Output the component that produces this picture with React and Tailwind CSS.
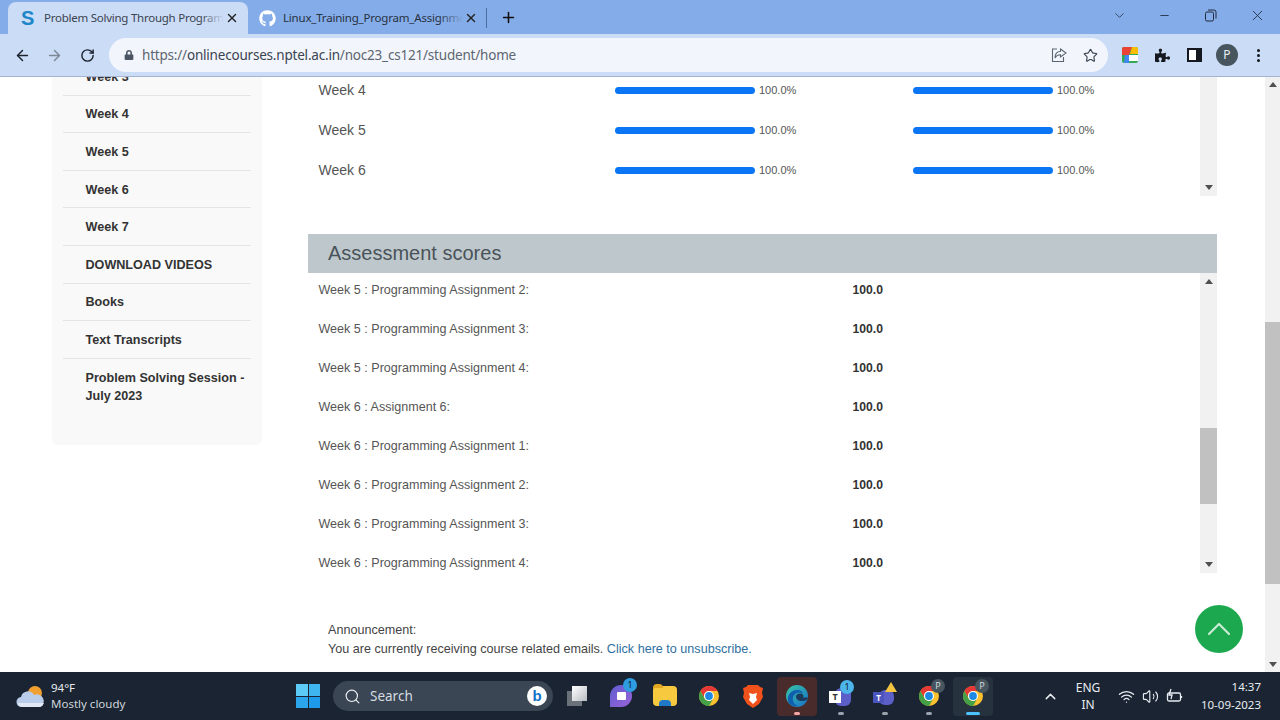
import React from "react";
import { ArrowLeft, ArrowRight, RotateCw, Star, X, Plus, Minus, ChevronDown, ChevronUp, Search, Wifi, Volume2 } from "lucide-react";
import { FaGithub, FaLock, FaPuzzlePiece } from "react-icons/fa";

const sans = "font-['Liberation_Sans',Arial,sans-serif]";
const ui = "font-['Noto_Sans',sans-serif]";

const sideItems = ["Week 3", "Week 4", "Week 5", "Week 6", "Week 7", "DOWNLOAD VIDEOS", "Books", "Text Transcripts"];
const progressRows = ["Week 4", "Week 5", "Week 6"];
const scores = [
  "Week 5 : Programming Assignment 2:",
  "Week 5 : Programming Assignment 3:",
  "Week 5 : Programming Assignment 4:",
  "Week 6 : Assignment 6:",
  "Week 6 : Programming Assignment 1:",
  "Week 6 : Programming Assignment 2:",
  "Week 6 : Programming Assignment 3:",
  "Week 6 : Programming Assignment 4:",
];

const Up = ({ className = "" }) => <div className={`w-0 h-0 border-x-[4px] border-x-transparent border-b-[5px] border-b-[#505050] ${className}`} />;
const Down = ({ className = "" }) => <div className={`w-0 h-0 border-x-[4px] border-x-transparent border-t-[5px] border-t-[#505050] ${className}`} />;

const ChromeLogo = ({ size = 24 }) => (
  <svg width={size} height={size} viewBox="0 0 24 24">
    <circle cx="12" cy="12" r="10" fill="#fbc02d" />
    <path d="M3.34 7A10 10 0 0 1 20.66 7H12A5 5 0 0 0 7.67 14.5Z" fill="#e53935" />
    <path d="M3.34 7L7.67 14.5A5 5 0 0 0 16.33 14.5L12 22A10 10 0 0 1 3.34 7Z" fill="#43a047" />
    <circle cx="12" cy="12" r="5" fill="#fff" />
    <circle cx="12" cy="12" r="3.9" fill="#1e88e5" />
  </svg>
);

const ProgressCell = () => (
  <div className="flex items-center">
    <div className="w-[140px] h-[7px] rounded-full bg-[#0b76f5]" />
    <span className="ml-[4px] pt-[1px] text-[11px] text-[#555]">100.0%</span>
  </div>
);

const TaskSlot = ({ children, active, dot, bar, warm }) => (
  <div className={`relative w-[40px] h-[39px] mx-[2px] rounded flex items-center justify-center ${active ? "bg-[#27323f]" : ""} ${warm ? "bg-[#4a2b2c]" : ""}`}>
    {children}
    {dot && <div className={`absolute bottom-[1px] left-1/2 -translate-x-1/2 w-[6px] h-[3px] rounded-full ${warm ? "bg-[#f2a6a6]" : "bg-[#9aa3ad]"}`} />}
    {bar && <div className="absolute bottom-[1px] left-1/2 -translate-x-1/2 w-[14px] h-[3px] rounded-full bg-[#4cc2ff]" />}
  </div>
);

const Badge = ({ children, className = "" }) => (
  <div className={`absolute w-[14px] h-[14px] rounded-full flex items-center justify-center text-[9px] ${ui} ${className}`}>{children}</div>
);

const TabStrip = () => (
  <div className="h-[34px] bg-[#84ace8] flex items-end pl-[8px] relative">
    <div className="w-[240px] h-[32px] bg-[#cbdcf6] rounded-t-lg flex items-center pl-[13px]">
      <span className={`w-[16px] text-[20px] leading-none font-bold text-[#1d86c8] ${sans}`}>S</span>
      <div className="relative ml-[7px] w-[180px] overflow-hidden whitespace-nowrap text-[11.5px] tracking-[-0.25px] text-[#3a4350]">
        Problem Solving Through Programming in C
        <div className="absolute inset-y-0 right-0 w-[24px] bg-gradient-to-r from-transparent to-[#cbdcf6]" />
      </div>
      <X size={14} strokeWidth={2.4} className="ml-[1px] text-[#222]" />
    </div>
    <div className="w-[230px] h-[32px] flex items-center pl-[11px]">
      <FaGithub size={17} className="text-white" />
      <div className="relative ml-[7px] w-[180px] overflow-hidden whitespace-nowrap text-[11.5px] tracking-[-0.2px] text-[#27313f]">
        Linux_Training_Program_Assignment
        <div className="absolute inset-y-0 right-0 w-[24px] bg-gradient-to-r from-transparent to-[#84ace8]" />
      </div>
      <X size={14} strokeWidth={2.4} className="ml-[1px] text-[#222]" />
    </div>
    <div className="w-px h-[20px] mb-[6px] bg-[#4d6f9f] ml-[8px]" />
    <Plus size={17} strokeWidth={2.2} className="ml-[13px] mb-[8px] text-[#111]" />
    <div className="ml-auto flex items-center h-[30px] self-start text-[#1f2b3c]">
      <ChevronDown size={15} strokeWidth={1.2} className="mr-[31px]" />
      <Minus size={13} strokeWidth={1.6} className="mr-[33px]" />
      <svg width="13" height="13" viewBox="0 0 13 13" fill="none" stroke="currentColor" strokeWidth="1" className="mr-[32px]">
        <rect x="1.5" y="3" width="8" height="9" rx="1.5" />
        <path d="M4 1h6a2 2 0 0 1 2 2v6.5" />
      </svg>
      <X size={17} strokeWidth={1.2} className="mr-[14px]" />
    </div>
  </div>
);

const Toolbar = () => (
  <div className="h-[43px] bg-[#cbdcf6] border-b border-b-[#a3b3d0] flex items-center">
    <ArrowLeft size={17} strokeWidth={2.1} className="ml-[14px] text-[#1c2430]" />
    <ArrowRight size={17} strokeWidth={2.1} className="ml-[15px] text-[#7d8896]" />
    <RotateCw size={15} strokeWidth={2.3} className="ml-[17px] text-[#1c2430]" />
    <div className="ml-[14px] w-[999px] h-[34px] rounded-full bg-[#f2f6fc] flex items-center pl-[15px] pr-[10px]">
      <FaLock size={10} className="text-[#4b5563]" />
      <div className="ml-[8px] text-[13.5px] text-[#5d6570] tracking-[-0.2px]">
        https://<span className="text-[#3a4350]">onlinecourses.nptel.ac.in</span>/noc23_cs121/student/home
      </div>
      <svg width="16" height="16" viewBox="0 0 16 16" fill="none" stroke="#5b6470" strokeWidth="1.1" className="ml-auto mr-[16px]">
        <path d="M6 2H1.5v12.5h11V10" />
        <path d="M9.5 2l5.5 4-5.500 4V7.8C6.5 7.8 5 9 4 11c0-4 2-6.5 5.5-6.8Z" />
      </svg>
      <Star size={15} strokeWidth={1.8} className="text-[#3a4350]" />
    </div>
    <svg width="16" height="16" viewBox="0 0 16 16" className="ml-[14px]">
      <rect x="0" y="0" width="16" height="16" rx="2" fill="#34a853" />
      <path d="M0 2a2 2 0 0 1 2-2h8L7 8H0Z" fill="#ea4335" />
      <path d="M10 0h4a2 2 0 0 1 2 2v5H8Z" fill="#fbbc04" />
      <rect x="7" y="8" width="9" height="6" fill="#fff" />
      <path d="M3 8h4v8H2Z" fill="#4285f4" />
    </svg>
    <FaPuzzlePiece size={15} className="ml-[17px] text-[#15191f]" />
    <div className="ml-[17px] w-[15px] h-[14px] border-2 border-[#15191f] border-r-[6px] bg-white" />
    <div className={`ml-[14px] w-[22px] h-[22px] rounded-full bg-[#47555e] text-[#e8eef5] text-[12px] flex items-center justify-center ${ui}`}>P</div>
    <div className="ml-[19px] flex flex-col gap-[2px]">
      <div className="w-[3px] h-[3px] rounded-full bg-[#15191f]" />
      <div className="w-[3px] h-[3px] rounded-full bg-[#15191f]" />
      <div className="w-[3px] h-[3px] rounded-full bg-[#15191f]" />
    </div>
  </div>
);

const Sidebar = () => (
  <aside className="w-[210px] h-[368px] shrink-0 bg-[#f9f9f9] rounded-b-md px-[11px] overflow-hidden">
    <ul className="-mt-[19px]">
      {sideItems.map((item) => (
        <li key={item} className="h-[37.6px] pt-[2px] border-b border-b-[#e4e4e4] pl-[22.5px] flex items-center text-[12.6px] font-bold text-[#333]">
          {item}
        </li>
      ))}
      <li className="pl-[22.5px] pt-[10px] text-[12.6px] leading-[18px] font-bold text-[#333]">
        Problem Solving Session -<br />July 2023
      </li>
    </ul>
  </aside>
);

const ProgressPanel = () => (
  <div className="h-[119px] flex overflow-hidden">
    <div className="flex-1 pl-[10.5px] -mt-[7px]">
      {progressRows.map((week) => (
        <div key={week} className="h-[40px] flex items-center">
          <div className="w-[296.5px] text-[14px] text-[#555]">{week}</div>
          <div className="w-[298px]"><ProgressCell /></div>
          <ProgressCell />
        </div>
      ))}
    </div>
    <div className="w-[17px] bg-[#f1f1f1] flex flex-col justify-end items-center pb-[6px]">
      <Down />
    </div>
  </div>
);

const ScoresPanel = () => (
  <div className="h-[300px] flex overflow-hidden">
    <div className="flex-1 pl-[10.5px] -mt-[2px]">
      {scores.map((label) => (
        <div key={label} className="h-[39px] flex items-center text-[12.55px] text-[#555]">
          <div className="w-[534px]">{label}</div>
          <div className="font-bold text-[12.2px] text-[#333]">100.0</div>
        </div>
      ))}
    </div>
    <div className="relative w-[17px] bg-[#f1f1f1] flex flex-col justify-between items-center py-[6px]">
      <Up />
      <div className="absolute left-0 right-0 top-[155px] h-[76px] bg-[#c1c1c1]" />
      <Down />
    </div>
  </div>
);

const Taskbar = () => (
  <div className={`h-[48px] bg-[#1a2432] flex items-center text-[#e8ecf1] ${ui}`}>
    <svg width="30" height="26" viewBox="0 0 30 26" className="ml-[16px]">
      <circle cx="19" cy="10" r="7" fill="#f0a030" />
      <path d="M6 24a5 5 0 0 1-1-10 7 7 0 0 1 13-2 6 6 0 0 1 6 12Z" fill="#b9cdea" />
      <path d="M2 20a5 5 0 0 0 4 4h18a6 6 0 0 0 4-4Z" fill="#e2e9f4" />
    </svg>
    <div className="ml-[5px] w-[100px] text-[11.5px] leading-[16px]">
      <div>94°F</div>
      <div className="text-[#cfd5dc]">Mostly cloudy</div>
    </div>
    <div className="ml-[145px] grid grid-cols-2 gap-[1px] w-[24px]">
      <div className="h-[11.5px] bg-[#5ccbf5]" />
      <div className="h-[11.5px] bg-[#3fb5f0]" />
      <div className="h-[11.5px] bg-[#2ba5ec]" />
      <div className="h-[11.5px] bg-[#1d9bea]" />
    </div>
    <div className="ml-[13px] w-[220px] h-[30px] rounded-full bg-[#3a4654] flex items-center pl-[11px] pr-[6px]">
      <Search size={17} strokeWidth={1.6} className="text-[#f0f3f6]" />
      <span className="ml-[9px] text-[13.5px] text-[#d6dbe1]">Search</span>
      <div className={`ml-auto w-[20px] h-[20px] rounded-full bg-white flex items-center justify-center text-[15px] font-bold text-[#1472c9] ${sans}`}>b</div>
    </div>
    <div className="ml-[2px] flex items-center">
      <TaskSlot>
        <div className="relative w-[20px] h-[20px]">
          <div className="absolute left-0 bottom-0 w-[15px] h-[15px] bg-[#6b7178]" />
          <div className="absolute right-0 top-0 w-[15px] h-[15px] bg-gradient-to-br from-white to-[#b9bec4]" />
        </div>
      </TaskSlot>
      <TaskSlot>
        <div className="relative w-[22px] h-[22px] rounded-full rounded-bl-sm bg-gradient-to-br from-[#5f5bd0] to-[#9a63d8] flex items-center justify-center">
          <div className="w-[9px] h-[8px] bg-white rounded-[1px]" />
          <Badge className="-top-[7px] -right-[5px] bg-[#2f9be0] text-[#10202e]">1</Badge>
        </div>
      </TaskSlot>
      <TaskSlot>
        <div className="relative w-[24px] h-[20px] rounded-sm bg-[#f7c93e]">
          <div className="absolute left-0 -top-[2px] w-[10px] h-[4px] bg-[#e5a823] rounded-t-sm" />
          <div className="absolute left-[6px] bottom-0 w-[12px] h-[6px] bg-[#1f78c8] rounded-t-sm" />
        </div>
      </TaskSlot>
      <TaskSlot><ChromeLogo /></TaskSlot>
      <TaskSlot>
        <svg width="22" height="25" viewBox="0 0 22 25">
          <path d="M6 1h10l2 2 3 1-1 5 1 4-4 7-6 4-6-4-4-7 1-4-1-5 3-1Z" fill="#f1511b" />
          <path d="M7 9l4 1 4-1-1 4 1 3-4 4-4-4 1-3Z" fill="#fff" />
        </svg>
      </TaskSlot>
      <TaskSlot warm dot>
        <svg width="24" height="24" viewBox="0 0 24 24">
          <defs>
            <linearGradient id="edge" x1="0" y1="0" x2="1" y2="1">
              <stop offset="0" stopColor="#36c7a5" />
              <stop offset="1" stopColor="#1a6fc9" />
            </linearGradient>
          </defs>
          <circle cx="12" cy="12" r="11" fill="url(#edge)" />
          <path d="M23 13c0 3-3 4-6 4-4 0-6-2-6-4.500 0-2 2-3 4-3 3 0 4 2 3 4h5Z" fill="#1c3a5e" />
          <path d="M4 19c-3-6 1-13 8-13 3 0 5 1 6 3-6-2-11 2-10 7 0 2 2 5 5 6-4 1-7-1-9-3Z" fill="#0f5fb0" />
        </svg>
      </TaskSlot>
      <TaskSlot dot>
        <div className="relative w-[24px] h-[24px]">
          <div className="absolute right-[2px] top-[4px] w-[16px] h-[18px] rounded-md bg-[#5b5fc7]" />
          <div className="absolute left-0 top-[7px] w-[12px] h-[12px] bg-white text-[#333] text-[9px] font-bold flex items-center justify-center">T</div>
          <Badge className="-top-[4px] -right-[1px] bg-[#4cb5ea] text-[#10202e]">1</Badge>
        </div>
      </TaskSlot>
      <TaskSlot dot>
        <div className="relative w-[24px] h-[24px]">
          <div className="absolute right-[3px] top-[6px] w-[15px] h-[15px] rounded-md bg-[#5b5fc7]" />
          <div className="absolute left-0 top-[8px] w-[11px] h-[11px] bg-[#4b53bc] text-white text-[8px] font-bold flex items-center justify-center">T</div>
          <div className="absolute right-0 -top-[2px] w-0 h-0 border-x-[6px] border-x-transparent border-b-[10px] border-b-[#f5c542]" />
        </div>
      </TaskSlot>
      <TaskSlot dot>
        <div className="relative">
          <ChromeLogo />
          <Badge className="-top-[5px] -right-[4px] bg-[#47555e] text-[#cfd8df]">P</Badge>
        </div>
      </TaskSlot>
      <TaskSlot active bar>
        <div className="relative">
          <ChromeLogo />
          <Badge className="-top-[5px] -right-[4px] bg-[#47555e] text-[#cfd8df]">P</Badge>
        </div>
      </TaskSlot>
    </div>
    <ChevronUp size={17} strokeWidth={2} className="ml-[47px]" />
    <div className="ml-[11px] w-[36px] text-center text-[12px] leading-[17px]">
      <div>ENG</div>
      <div>IN</div>
    </div>
    <Wifi size={17} strokeWidth={1.8} className="ml-[12px]" />
    <Volume2 size={17} strokeWidth={1.6} className="ml-[7px]" />
    <svg width="17" height="16" viewBox="0 0 17 16" fill="none" stroke="currentColor" strokeWidth="1.3" className="ml-[7px]">
      <rect x="1.500" y="5" width="13" height="8" rx="1.500" />
      <path d="M15.500 8v2M5 1 3 7h3l-1 4" />
    </svg>
    <div className="ml-auto mr-[19px] text-right text-[11.5px] leading-[18px]">
      <div>14:37</div>
      <div>10-09-2023</div>
    </div>
  </div>
);

export default function App() {
  return (
    <div className={`w-[1280px] h-[720px] flex flex-col overflow-hidden bg-white ${ui}`}>
      <TabStrip />
      <Toolbar />
      <main className={`relative flex-1 flex min-h-0 overflow-hidden ${sans}`}>
        <div className="flex-1 flex pl-[52px] pt-0">
          <Sidebar />
          <div className="ml-[46px] w-[909px]">
            <ProgressPanel />
            <div className="mt-[38px] h-[39px] bg-[#bec8cc] pl-[20px] pb-[2px] flex items-center text-[20px] text-[#4a5359]">Assessment scores</div>
            <ScoresPanel />
            <div className="mt-[48px] pl-[20px] text-[12.6px] leading-[19px] text-[#444]">
              <div>Announcement:</div>
              <div>You are currently receiving course related emails. <span className="text-[#2f6f9f]">Click here to unsubscribe.</span></div>
            </div>
          </div>
        </div>
        <div className="relative w-[15px] bg-[#f1f1f1] flex flex-col justify-between items-center py-[5px]">
          <Up />
          <div className="absolute left-0 right-0 top-[245px] h-[262px] bg-[#c1c1c1]" />
          <Down />
        </div>
        <button className="absolute left-[1195px] top-[528px] w-[48px] h-[48px] rounded-full bg-[#1ca84f] flex items-center justify-center">
          <ChevronUp size={40} strokeWidth={1.3} className="text-[#c8ecd4]" />
        </button>
      </main>
      <Taskbar />
    </div>
  );
}
